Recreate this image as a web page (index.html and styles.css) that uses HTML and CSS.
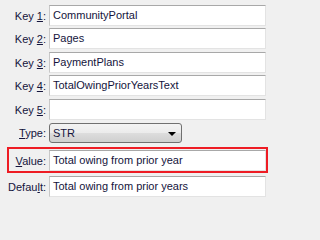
FILE: index.html
```html
<!DOCTYPE html>
<html>
<head>
<meta charset="utf-8">
<link rel="stylesheet" href="styles.css">
</head>
<body>
<div class="form">
  <div class="row r1"><label class="lbl">Key <u>1</u>:</label><div class="field">CommunityPortal</div></div>
  <div class="row r2"><label class="lbl">Key <u>2</u>:</label><div class="field">Pages</div></div>
  <div class="row r3"><label class="lbl">Key <u>3</u>:</label><div class="field">PaymentPlans</div></div>
  <div class="row r4"><label class="lbl">Key <u>4</u>:</label><div class="field">TotalOwingPriorYearsText</div></div>
  <div class="row r5"><label class="lbl">Key <u>5</u>:</label><div class="field"></div></div>
  <div class="row r6"><label class="lbl"><u>T</u>ype:</label><div class="select"><span>STR</span><span class="arrow"></span></div></div>
  <div class="row r7 highlight"><label class="lbl"><u>V</u>alue:</label><div class="field">Total owing from prior year</div></div>
  <div class="row r8"><label class="lbl">Defau<u>l</u>t:</label><div class="field">Total owing from prior years</div></div>
</div>
</body>
</html>
```
FILE: styles.css
```css
html, body {
  margin: 0;
  padding: 0;
  background: #f0f0f0;
  width: 270px;
  height: 201px;
  overflow: hidden;
}
.form {
  padding-top: 5px;
  font-family: "Liberation Sans", Arial, sans-serif;
  font-size: 11px;
  color: #14143c;
}
.row {
  display: flex;
  align-items: center;
  height: 21px;
  position: relative;
}
.r1, .r3 { margin-bottom: 2px; }
.r2, .r4, .r5 { margin-bottom: 3px; }
.r6 { height: 20px; margin-bottom: 7px; }
.r7 { margin-bottom: 5px; }
.lbl {
  width: 46px;
  padding-right: 3px;
  text-align: right;
  white-space: nowrap;
  flex: none;
}
.lbl u {
  text-decoration-thickness: 1px;
  text-underline-offset: 1px;
}
.field {
  box-sizing: border-box;
  width: 217px;
  height: 21px;
  background: #fff;
  border: 1px solid #e3e3e3;
  border-top-color: #a8a8a8;
  border-left-color: #c8c8c8;
  padding: 0 3px;
  line-height: 19px;
  white-space: nowrap;
  overflow: hidden;
}
.select {
  box-sizing: border-box;
  width: 133px;
  height: 20px;
  border: 1px solid #707070;
  border-radius: 3px;
  background: linear-gradient(#f3f3f3 0%, #ebebeb 50%, #dddddd 51%, #cfcfcf 100%);
  display: flex;
  align-items: center;
  justify-content: space-between;
  padding: 0 5px 0 3px;
  line-height: 18px;
}
.arrow {
  width: 0;
  height: 0;
  border-left: 4px solid transparent;
  border-right: 4px solid transparent;
  border-top: 4px solid #000;
  margin-top: 1px;
}
.highlight::after {
  content: "";
  position: absolute;
  left: 7px;
  right: 2px;
  top: -3px;
  bottom: -2px;
  border: 2px solid #ee1c24;
  pointer-events: none;
}
```
